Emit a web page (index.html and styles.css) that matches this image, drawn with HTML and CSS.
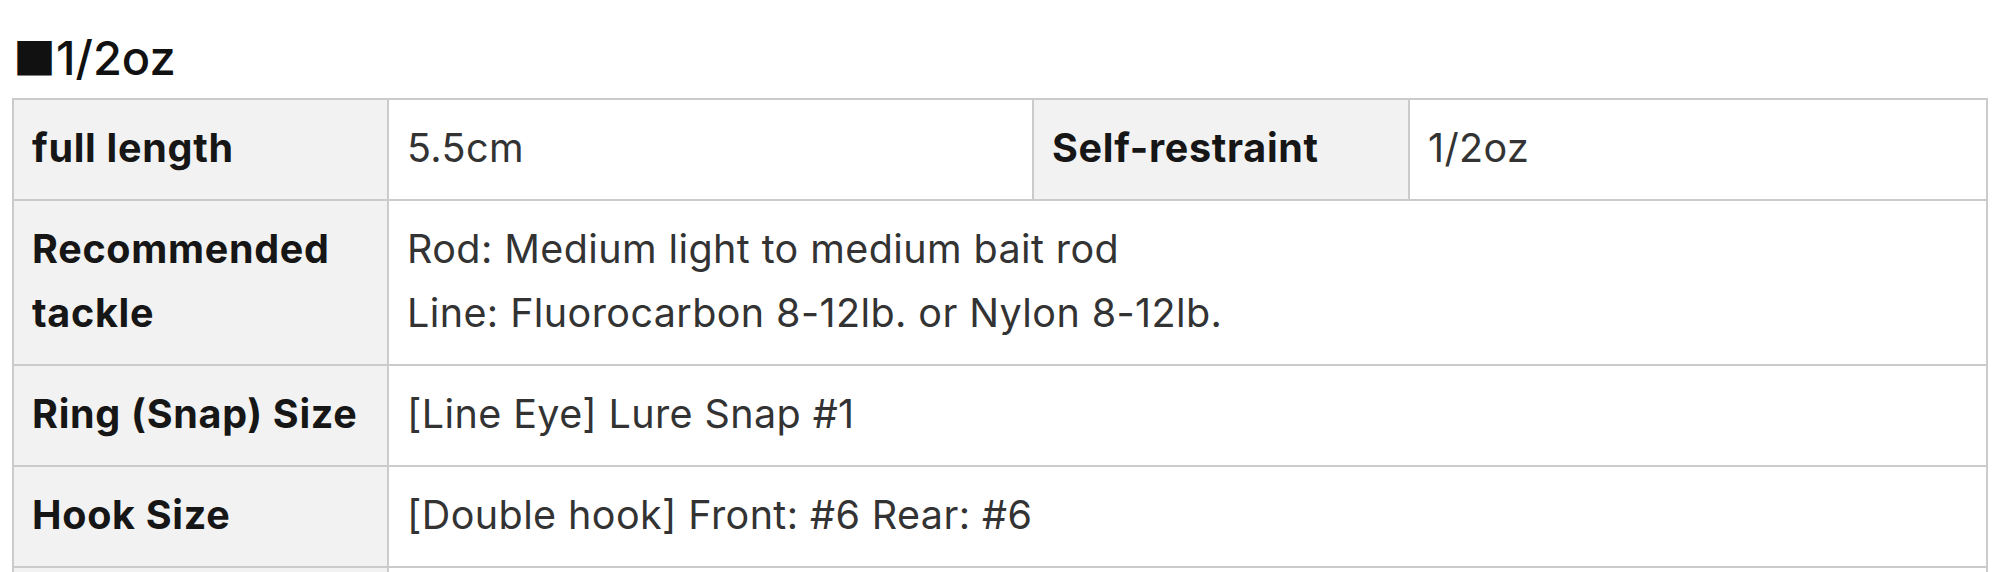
FILE: index.html
```html
<!DOCTYPE html>
<html lang="en">
<head>
<meta charset="utf-8">
<title>1/2oz spec</title>
<link rel="stylesheet" href="styles.css">
</head>
<body>
<div class="page">
  <h2 class="spec-title"><span class="spec-mark">■</span>1/2oz</h2>
  <table class="spec-table">
    <colgroup>
      <col class="col-label">
      <col class="col-value">
      <col class="col-label2">
      <col class="col-value2">
    </colgroup>
    <tbody>
      <tr>
        <th>full length</th>
        <td>5.5cm</td>
        <th>Self-restraint</th>
        <td>1/2oz</td>
      </tr>
      <tr>
        <th>Recommended tackle</th>
        <td colspan="3">Rod: Medium light to medium bait rod<br>Line: Fluorocarbon 8-12lb. or Nylon 8-12lb.</td>
      </tr>
      <tr>
        <th>Ring (Snap) Size</th>
        <td colspan="3">[Line Eye] Lure Snap #1</td>
      </tr>
      <tr>
        <th>Hook Size</th>
        <td colspan="3">[Double hook] Front: #6 Rear: #6</td>
      </tr>
      <tr>
        <th>&nbsp;</th>
        <td colspan="3">&nbsp;</td>
      </tr>
    </tbody>
  </table>
</div>
</body>
</html>
```
FILE: styles.css
```css
html, body {
  margin: 0;
  padding: 0;
  background: #ffffff;
}

.page {
  padding: 33px 0 0 12px;
  font-family: Inter, "Noto Sans CJK JP", sans-serif;
}

.spec-title {
  margin: 0 0 17px 0;
  padding-left: 1px;
  font-size: 47px;
  line-height: 47px;
  font-weight: 500;
  color: #111111;
}

.spec-mark {
  font-family: "Noto Sans CJK JP", sans-serif;
  font-size: 43px;
}

.spec-table {
  table-layout: fixed;
  width: 1976px;
  border-collapse: separate;
  border-spacing: 0;
  border-top: 2px solid #cbcbcb;
  border-left: 2px solid #cbcbcb;
}

.col-label { width: 375px; }
.col-value { width: 645px; }
.col-label2 { width: 376px; }
.col-value2 { width: 578px; }

.spec-table th,
.spec-table td {
  border-right: 2px solid #cbcbcb;
  border-bottom: 2px solid #cbcbcb;
  padding: 15.5px 18px 19.5px 18px;
  font-size: 39.5px;
  line-height: 64px;
  text-align: left;
  vertical-align: middle;
}

.spec-table th {
  background: #f2f2f2;
  font-weight: 700;
  letter-spacing: 0.7px;
  color: #161616;
}

.spec-table td {
  background: #ffffff;
  font-weight: 400;
  letter-spacing: 0.4px;
  color: #333333;
}
```
